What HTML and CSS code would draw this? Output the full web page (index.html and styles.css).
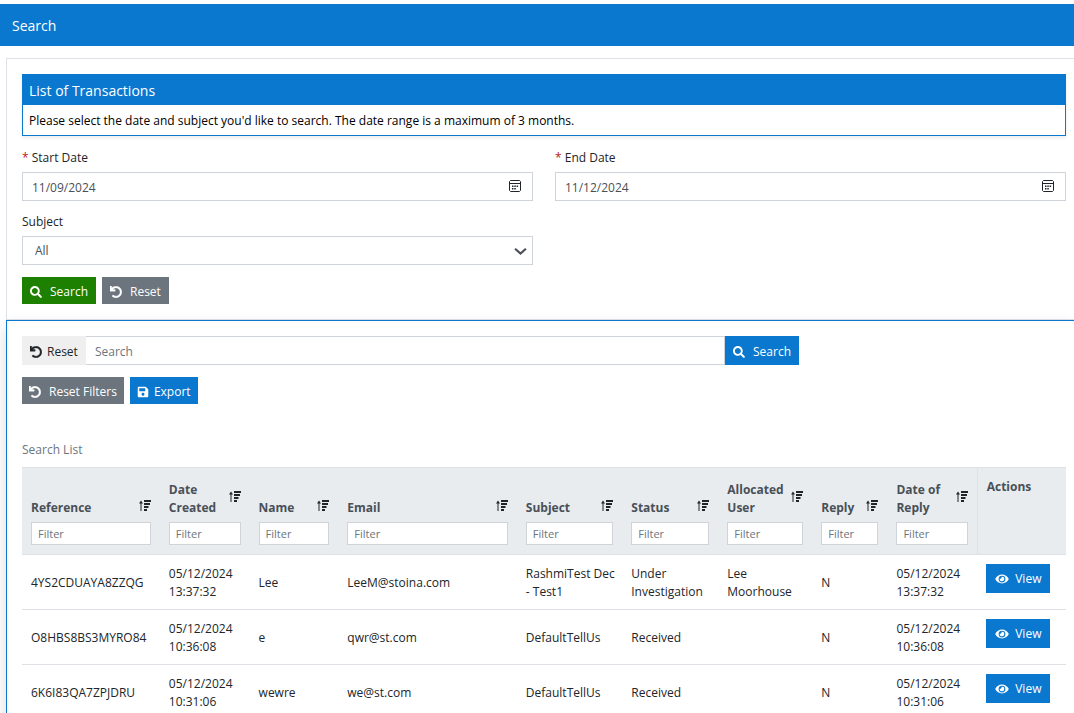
FILE: index.html
```html
<!DOCTYPE html>
<html lang="en">
  <head>
    <meta charset="UTF-8" />
    <meta name="viewport" content="width=device-width, initial-scale=1" />
    <title>Search</title>
    <link rel="stylesheet" href="styles.css">
  </head>
  <body>
    <svg class="sprite" aria-hidden="true">
      <symbol id="icon-search" viewBox="0 0 512 512">
        <path d="M505 442.7L405.3 343c-4.5-4.5-10.6-7-17-7H372c27.6-35.3 44-79.7 44-128C416 93.1 322.9 0 208 0S0 93.1 0 208s93.1 208 208 208c48.3 0 92.7-16.4 128-44v16.3c0 6.4 2.5 12.5 7 17l99.7 99.7c9.4 9.4 24.6 9.4 33.9 0l28.3-28.3c9.4-9.4 9.4-24.6.1-34zM208 336c-70.7 0-128-57.2-128-128 0-70.7 57.2-128 128-128 70.7 0 128 57.2 128 128 0 70.7-57.2 128-128 128z" />
      </symbol>
      <symbol id="icon-undo" viewBox="0 0 512 512">
        <path d="M212.333 224.333H12c-6.627 0-12-5.373-12-12V12C0 5.373 5.373 0 12 0h48c6.627 0 12 5.373 12 12v78.112C117.773 39.279 184.26 7.47 258.175 8.007c136.906.994 246.448 111.623 246.157 248.532C504.041 393.258 393.12 504 256.333 504c-64.089 0-122.496-24.313-166.51-64.215-5.099-4.622-5.334-12.554-.467-17.42l33.967-33.967c4.474-4.474 11.662-4.717 16.401-.525C170.76 415.336 211.58 432 256.333 432c97.268 0 176-78.716 176-176 0-97.267-78.716-176-176-176-58.496 0-110.28 28.476-142.274 72.333h98.274c6.627 0 12 5.373 12 12v48c0 6.627-5.373 12-12 12z" stroke="currentColor" stroke-width="16" />
      </symbol>
      <symbol id="icon-save" viewBox="0 0 448 512">
        <path d="M433.941 129.941l-83.882-83.882A48 48 0 0 0 316.118 32H48C21.49 32 0 53.49 0 80v352c0 26.51 21.49 48 48 48h352c26.51 0 48-21.49 48-48V163.882a48 48 0 0 0-14.059-33.941zM224 416c-35.346 0-64-28.654-64-64 0-35.346 28.654-64 64-64s64 28.654 64 64c0 35.346-28.654 64-64 64zm96-304.52V212c0 6.627-5.373 12-12 12H76c-6.627 0-12-5.373-12-12V108c0-6.627 5.373-12 12-12h228.52c3.183 0 6.235 1.264 8.485 3.515l3.48 3.48A11.996 11.996 0 0 1 320 111.48z" />
      </symbol>
      <symbol id="icon-eye" viewBox="0 0 576 512">
        <path d="M572.52 241.4C518.29 135.59 410.93 64 288 64S57.68 135.64 3.48 241.41a32.35 32.35 0 0 0 0 29.19C57.71 376.41 165.07 448 288 448s230.32-71.64 284.52-177.41a32.35 32.35 0 0 0 0-29.19zM288 400a144 144 0 1 1 144-144 143.93 143.93 0 0 1-144 144zm0-240a95.31 95.31 0 0 0-25.31 3.79 47.85 47.85 0 0 1-66.9 66.9A95.78 95.78 0 1 0 288 160z" />
      </symbol>
      <symbol id="icon-sort" viewBox="0 0 12 12">
        <path d="M1.5 11V3.5H0L2 .5l2 3H2.5V11zM5 0h7v2H5zM5 3h6v2H5zM5 6h4.5v2H5zM5 9h3v2H5z" />
      </symbol>
      <symbol id="icon-calendar" viewBox="0 0 12 12">
        <path d="M1.5.5h9l1 1v9l-1 1h-9l-1-1v-9zM.5 3.5h11" fill="none" stroke="currentColor" />
        <path d="M3 5.5h1.5V7H3zM5.3 5.5h1.5V7H5.3zM7.6 5.5h1.5V7H7.6zM3 8h1.5v1.5H3zM5.3 8h1.5v1.5H5.3z" />
      </symbol>
      <symbol id="icon-chevron" viewBox="0 0 12 8">
        <path d="M1 1.5l5 4.5 5-4.5" fill="none" stroke="currentColor" stroke-width="2" />
      </symbol>
    </svg>

    <header class="page-header">
      <h1>Search</h1>
    </header>

    <main>
      <section class="card">
        <div class="panel">
          <h2>List of Transactions</h2>
          <p>Please select the date and subject you'd like to search. The date range is a maximum of 3 months.</p>
        </div>

        <form class="criteria">
          <div class="field">
            <label for="start-date"><span class="required">*</span> Start Date</label>
            <div class="control">
              <input type="text" id="start-date" value="11/09/2024" />
              <button type="button" class="picker" aria-label="Choose start date"><svg class="icon"><use href="#icon-calendar" /></svg></button>
            </div>
          </div>
          <div class="field">
            <label for="end-date"><span class="required">*</span> End Date</label>
            <div class="control">
              <input type="text" id="end-date" value="11/12/2024" />
              <button type="button" class="picker" aria-label="Choose end date"><svg class="icon"><use href="#icon-calendar" /></svg></button>
            </div>
          </div>
          <div class="field">
            <label for="subject">Subject</label>
            <div class="control">
              <select id="subject">
                <option>All</option>
              </select>
              <svg class="chevron"><use href="#icon-chevron" /></svg>
            </div>
          </div>
          <div class="buttons">
            <button type="button" class="btn btn-success"><svg class="icon"><use href="#icon-search" /></svg>Search</button>
            <button type="reset" class="btn btn-secondary"><svg class="icon"><use href="#icon-undo" /></svg>Reset</button>
          </div>
        </form>
      </section>

      <section class="card card-results">
        <div class="search-group">
          <button type="button" class="btn btn-light"><svg class="icon"><use href="#icon-undo" /></svg>Reset</button>
          <input type="text" placeholder="Search" aria-label="Search" />
          <button type="button" class="btn btn-primary"><svg class="icon"><use href="#icon-search" /></svg>Search</button>
        </div>
        <div class="buttons">
          <button type="button" class="btn btn-secondary btn-narrow"><svg class="icon"><use href="#icon-undo" /></svg>Reset Filters</button>
          <button type="button" class="btn btn-primary btn-narrow btn-tight"><svg class="icon"><use href="#icon-save" /></svg>Export</button>
        </div>

        <table>
          <caption>Search List</caption>
          <colgroup>
            <col class="col-reference" />
            <col class="col-created" />
            <col class="col-name" />
            <col class="col-email" />
            <col class="col-subject" />
            <col class="col-status" />
            <col class="col-user" />
            <col class="col-reply" />
            <col class="col-replied" />
            <col class="col-actions" />
          </colgroup>
          <thead>
            <tr>
              <th>
                <div class="heading"><span>Reference</span><svg class="icon"><use href="#icon-sort" /></svg></div>
                <input type="text" placeholder="Filter" aria-label="Filter reference" />
              </th>
              <th>
                <div class="heading"><span>Date Created</span><svg class="icon"><use href="#icon-sort" /></svg></div>
                <input type="text" placeholder="Filter" aria-label="Filter date created" />
              </th>
              <th>
                <div class="heading"><span>Name</span><svg class="icon"><use href="#icon-sort" /></svg></div>
                <input type="text" placeholder="Filter" aria-label="Filter name" />
              </th>
              <th>
                <div class="heading"><span>Email</span><svg class="icon"><use href="#icon-sort" /></svg></div>
                <input type="text" placeholder="Filter" aria-label="Filter email" />
              </th>
              <th>
                <div class="heading"><span>Subject</span><svg class="icon"><use href="#icon-sort" /></svg></div>
                <input type="text" placeholder="Filter" aria-label="Filter subject" />
              </th>
              <th>
                <div class="heading"><span>Status</span><svg class="icon"><use href="#icon-sort" /></svg></div>
                <input type="text" placeholder="Filter" aria-label="Filter status" />
              </th>
              <th>
                <div class="heading"><span>Allocated User</span><svg class="icon"><use href="#icon-sort" /></svg></div>
                <input type="text" placeholder="Filter" aria-label="Filter allocated user" />
              </th>
              <th>
                <div class="heading"><span>Reply</span><svg class="icon"><use href="#icon-sort" /></svg></div>
                <input type="text" placeholder="Filter" aria-label="Filter reply" />
              </th>
              <th>
                <div class="heading"><span>Date of Reply</span><svg class="icon"><use href="#icon-sort" /></svg></div>
                <input type="text" placeholder="Filter" aria-label="Filter date of reply" />
              </th>
              <th class="actions">Actions</th>
            </tr>
          </thead>
          <tbody>
            <tr>
              <td>4YS2CDUAYA8ZZQG</td>
              <td>05/12/2024 13:37:32</td>
              <td>Lee</td>
              <td>LeeM@stoina.com</td>
              <td>RashmiTest&nbsp;Dec - Test1</td>
              <td>Under Investigation</td>
              <td>Lee Moorhouse</td>
              <td>N</td>
              <td>05/12/2024 13:37:32</td>
              <td class="actions"><button type="button" class="btn btn-primary"><svg class="icon"><use href="#icon-eye" /></svg>View</button></td>
            </tr>
            <tr>
              <td>O8HBS8BS3MYRO84</td>
              <td>05/12/2024 10:36:08</td>
              <td>e</td>
              <td>qwr@st.com</td>
              <td>DefaultTellUs</td>
              <td>Received</td>
              <td></td>
              <td>N</td>
              <td>05/12/2024 10:36:08</td>
              <td class="actions"><button type="button" class="btn btn-primary"><svg class="icon"><use href="#icon-eye" /></svg>View</button></td>
            </tr>
            <tr>
              <td>6K6I83QA7ZPJDRU</td>
              <td>05/12/2024 10:31:06</td>
              <td>wewre</td>
              <td>we@st.com</td>
              <td>DefaultTellUs</td>
              <td>Received</td>
              <td></td>
              <td>N</td>
              <td>05/12/2024 10:31:06</td>
              <td class="actions"><button type="button" class="btn btn-primary"><svg class="icon"><use href="#icon-eye" /></svg>View</button></td>
            </tr>
          </tbody>
        </table>
      </section>
    </main>
  </body>
</html>
```

FILE: styles.css
```css
* {
  box-sizing: border-box;
}

body {
  margin: 0;
  padding-top: 4px;
  font-family: 'Segoe UI', 'Open Sans', 'Noto Sans', sans-serif;
  font-size: 12px;
  line-height: 18px;
  color: #212529;
  background-color: #fff;
  overflow-x: hidden;
}

button,
input,
select {
  font: inherit;
  border-radius: 0;
}

h1,
h2,
p {
  margin: 0;
}

.sprite {
  position: absolute;
  width: 0;
  height: 0;
}

.icon {
  width: 12px;
  height: 12px;
  flex: none;
  fill: currentColor;
}

.page-header {
  padding: 13px 12px 11px;
  color: #fff;
  background-color: #0a78cf;
}

h1,
h2 {
  font-size: 14px;
  font-weight: 400;
  line-height: 18px;
}

main {
  padding: 12px 0 0 6px;
}

.card {
  padding: 15px 8px 15px 15px;
  border: 1px solid #dee2e6;
  border-right: none;
}

.card-results {
  padding-bottom: 24px;
  border-color: #0a78cf;
  box-shadow: 0 8px 16px rgba(0, 0, 0, 0.15);
}

.panel {
  border: 1px solid #0a78cf;
  box-shadow: 0 2px 4px rgba(0, 0, 0, 0.08);
}

.panel h2,
.panel p {
  padding: 7px 6px 5px;
}

.panel h2 {
  color: #fff;
  background-color: #0a78cf;
}

.panel p {
  color: #000;
}

.criteria {
  display: grid;
  grid-template-columns: 1fr 1fr;
  gap: 12px 22px;
  margin-top: 13px;
}

.field label {
  display: block;
  margin-bottom: 5px;
}

.required {
  color: #b71c1c;
}

.control {
  position: relative;
}

.control input,
.control select,
.search-group input {
  display: block;
  width: 100%;
  height: 29px;
  padding: 2px 9px 0;
  border: 1px solid #ced4da;
  color: #495057;
  background-color: #fff;
}

.control select {
  padding: 1px 12px 0;
  appearance: none;
}

.picker {
  position: absolute;
  top: 0;
  right: 6px;
  display: flex;
  align-items: center;
  height: 28px;
  padding: 0 6px;
  border: none;
  color: #212529;
  background: none;
}

.chevron {
  position: absolute;
  top: 11px;
  right: 6px;
  width: 13px;
  height: 9px;
  color: #495057;
  pointer-events: none;
}

.buttons {
  display: flex;
  grid-column: 1 / -1;
  gap: 6px;
}

.btn {
  display: inline-flex;
  align-items: center;
  gap: 8px;
  height: 27px;
  padding: 2px 8px 0;
  border: none;
  color: #fff;
  white-space: nowrap;
  cursor: pointer;
}

.btn-narrow {
  padding: 2px 7px 0;
}

.btn-tight,
.btn-light {
  gap: 5px;
}

.btn-success {
  background-color: #1e8000;
}

.btn-secondary {
  background-color: #6c757d;
}

.btn-primary {
  background-color: #0a78cf;
}

.btn-light {
  color: #212529;
  background-color: #efefef;
}

.search-group {
  display: flex;
  width: calc(75% - 6px);
  margin-bottom: 12px;
}

.search-group .btn {
  height: 29px;
}

.search-group input {
  flex: 1;
  min-width: 0;
  border-left: none;
}

::placeholder {
  color: #6c757d;
  opacity: 1;
}

table {
  width: 100%;
  margin-top: 37px;
  border-collapse: collapse;
  table-layout: fixed;
}

caption {
  padding-bottom: 8px;
  color: #6c757d;
  text-align: left;
}

.col-reference {
  width: 13.2%;
}

.col-created,
.col-replied {
  width: 8.6%;
}

.col-name,
.col-actions {
  width: 8.5%;
}

.col-email {
  width: 17.1%;
}

.col-subject {
  width: 10.1%;
}

.col-status {
  width: 9.2%;
}

.col-user {
  width: 9%;
}

.col-reply {
  width: 7.2%;
}

th,
td {
  padding: 10px 9px 8px;
  text-align: left;
}

thead tr {
  border-top: 1px solid #dee2e6;
}

tr {
  border-bottom: 1px solid #dee2e6;
}

th {
  padding: 13px 9px 9px;
  color: #495057;
  background-color: #e8ecef;
  vertical-align: bottom;
}

th.actions {
  padding-top: 10px;
  border-left: 1px solid #dee2e6;
  vertical-align: top;
}

th input {
  display: block;
  width: 100%;
  height: 23px;
  padding: 0 6px;
  border: 1px solid #ced4da;
  font-size: 11px;
  font-weight: 400;
}

.heading {
  display: flex;
  align-items: center;
  justify-content: space-between;
  margin-bottom: 5px;
}

.heading .icon {
  margin-bottom: 4px;
  color: #212529;
}

td.actions {
  padding: 9px;
  vertical-align: top;
}

td .btn {
  display: flex;
  gap: 6px;
  height: 29px;
  padding: 0 9px;
}

td .btn .icon {
  width: 14px;
}
```
